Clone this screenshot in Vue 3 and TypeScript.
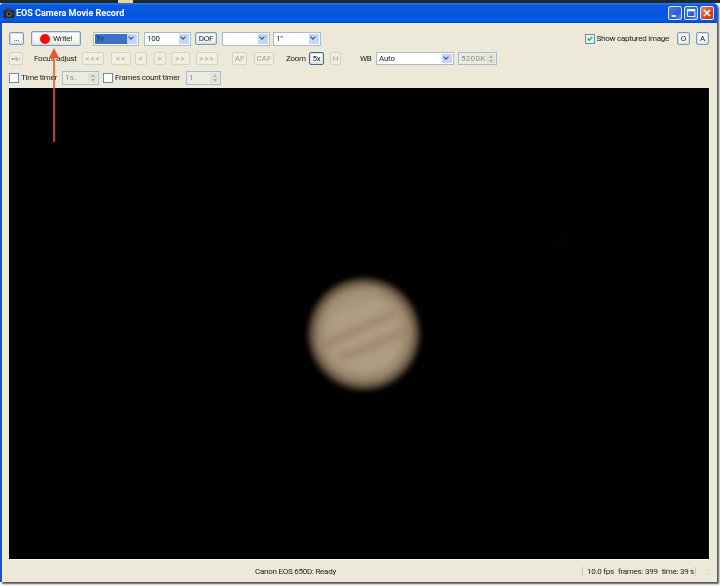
<script setup lang="ts">
const focusButtons: { label: string; cls: string }[] = [
  { label: '<<<', cls: 'f1' },
  { label: '<<', cls: 'f2' },
  { label: '<', cls: 'f3' },
  { label: '>', cls: 'f4' },
  { label: '>>', cls: 'f5' },
  { label: '>>>', cls: 'f6' },
]
</script>

<template>
  <div class="screen">
    <div class="desktop">
      <span class="desk-yellow"></span>
    </div>
    <div class="window">
      <header class="titlebar">
        <svg class="cam" viewBox="0 0 12 12" width="12" height="12">
          <rect x="0.5" y="3" width="11" height="8" rx="1" fill="#2b2a28" />
          <rect x="3" y="1.5" width="5" height="2.5" fill="#3c3a36" />
          <circle cx="6" cy="7" r="2.6" fill="#6d6a62" />
          <circle cx="6" cy="7" r="1.4" fill="#14140f" />
        </svg>
        <span class="title">EOS Camera Movie Record</span>
        <div class="winbtns">
          <span class="wb blue"><svg viewBox="0 0 14 14"><rect x="3" y="9.5" width="5" height="2" fill="#fff" /></svg></span>
          <span class="wb blue"><svg viewBox="0 0 14 14"><rect x="3" y="3" width="8.5" height="8" fill="none" stroke="#fff" stroke-width="1" /><rect x="3" y="3" width="8.5" height="2" fill="#fff" /></svg></span>
          <span class="wb red"><svg viewBox="0 0 14 14"><path d="M3.5 3.5l7 7M10.5 3.5l-7 7" stroke="#fff" stroke-width="1.8" fill="none" /></svg></span>
        </div>
      </header>

      <main class="client">
        <div class="row row1">
          <button class="btn dots">...</button>
          <button class="btn write"><span class="rec"></span>Write!</button>
          <div class="select tv"><span class="val sel">Tv</span><span class="arrow"></span></div>
          <div class="select iso"><span class="val">100</span><span class="arrow"></span></div>
          <button class="btn dof">DOF</button>
          <div class="select blank"><span class="val"></span><span class="arrow"></span></div>
          <div class="select shutter"><span class="val">1"</span><span class="arrow"></span></div>
          <label class="check show"><span class="box on"><svg viewBox="0 0 10 10" width="9" height="9"><path d="M2 5l2 2.2L8 3" fill="none" stroke="#2aa52a" stroke-width="1.7" /></svg></span>Show captured image</label>
          <button class="btn oa o">O</button>
          <button class="btn oa a">A</button>
        </div>

        <div class="row row2">
          <button class="btn off usb">
            <svg viewBox="0 0 14 8" width="11" height="6"><path d="M1 4h11M4 4l2-2h2M6 4l1.5 2H9" fill="none" stroke="#8a8a84" stroke-width="0.9" /><circle cx="1.5" cy="4" r="1.2" fill="#8a8a84" /></svg>
          </button>
          <span class="lbl focus">Focus adjust</span>
          <button v-for="b in focusButtons" :key="b.cls" class="btn off" :class="b.cls">{{ b.label }}</button>
          <button class="btn off af">AF</button>
          <button class="btn off caf">CAF</button>
          <span class="lbl zoom">Zoom</span>
          <button class="btn z5">5x</button>
          <button class="btn off h">H</button>
          <span class="lbl wbl">WB</span>
          <div class="select wbs"><span class="val">Auto</span><span class="arrow"></span></div>
          <div class="spin k"><span class="spinval">5200K</span><span class="spinarrows"><i class="up"></i><i class="down"></i></span></div>
        </div>

        <div class="row row3">
          <label class="check first"><span class="box"></span>Time timer</label>
          <div class="spin s1"><span class="spinval">1s.</span><span class="spinarrows"><i class="up"></i><i class="down"></i></span></div>
          <label class="check fc"><span class="box"></span>Frames count timer</label>
          <div class="spin s2"><span class="spinval">1</span><span class="spinarrows"><i class="up"></i><i class="down"></i></span></div>
        </div>

        <div class="view">
          <svg class="sky" viewBox="0 0 700 471" width="700" height="471">
            <defs>
              <radialGradient id="disc" cx="50%" cy="50%" r="50%">
                <stop offset="0%" stop-color="#b0a188" />
                <stop offset="62%" stop-color="#ad9d82" />
                <stop offset="80%" stop-color="#97846a" />
                <stop offset="92%" stop-color="#5e4b3a" />
                <stop offset="100%" stop-color="#1a1410" />
              </radialGradient>
              <filter id="soft" x="-30%" y="-30%" width="160%" height="160%"><feGaussianBlur stdDeviation="2.6" /></filter>
              <filter id="softer" x="-30%" y="-60%" width="160%" height="220%"><feGaussianBlur stdDeviation="4" /></filter>
              <clipPath id="planet"><circle cx="355" cy="246" r="49" /></clipPath>
            </defs>
            <rect width="700" height="471" fill="#020101" />
            <circle cx="355" cy="246" r="57" fill="url(#disc)" filter="url(#soft)" />
            <g clip-path="url(#planet)" filter="url(#softer)">
              <path d="M310 259 L345 243 L388 224" fill="none" stroke="#9f806a" stroke-width="7" />
              <path d="M330 270 L365 257 L404 240" fill="none" stroke="#9f806a" stroke-width="7" />
              <path d="M322 222 L370 203" fill="none" stroke="#a0917a" stroke-width="7" />
            </g>
            <circle cx="554" cy="153" r="3" fill="#2a0c0a" filter="url(#softer)" />
            <circle cx="444" cy="181" r="2.5" fill="#101612" filter="url(#softer)" />
          </svg>
        </div>

        <footer class="status">
          <span class="ready">Canon EOS 650D: Ready</span>
          <span class="stats"><span class="fps">10.0 fps</span><span class="fr">frames: 399</span><span class="tm">time: 39 s</span></span>
          <span class="grip">.:</span>
        </footer>
      </main>
    </div>

    <svg class="arrowmark" viewBox="0 0 10 94" width="10" height="94">
      <path d="M5 8V94" stroke="#f0522a" stroke-width="1.6" fill="none" />
      <path d="M5 0L10 10H0Z" fill="#f0522a" />
    </svg>
  </div>
</template>

<style scoped>
.screen {
  position: relative;
  width: 720px;
  height: 586px;
  overflow: hidden;
  background: #fff;
  font-family: Roboto, "Liberation Sans", sans-serif;
  font-size: 8px;
  letter-spacing: -0.25px;
  color: #222;
  filter: blur(0.3px);
}
.desktop {
  position: relative;
  height: 3px;
  background: #1c2a2c;
}
.desk-yellow {
  position: absolute;
  left: 118px;
  top: 0;
  width: 15px;
  height: 3px;
  background: #e8d890;
}
.window {
  width: 717px;
  height: 579px;
  display: flex;
  flex-direction: column;
  background: #0f52e0;
  border-radius: 4px 4px 0 0;
  box-shadow: 2px 2px 2px #555;
}
.titlebar {
  height: 20px;
  flex: none;
  display: flex;
  align-items: center;
  padding: 0 3px 0 3px;
  background: linear-gradient(#2c7cf0 0%, #0a5ae6 12%, #0453dd 55%, #0a5ce8 85%, #0346c8 100%);
  border-radius: 4px 4px 0 0;
}
.cam { flex: none; }
.title {
  margin-left: 1px;
  color: #fff;
  font-size: 9px;
  font-weight: 700;
  letter-spacing: 0;
  white-space: nowrap;
}
.winbtns {
  margin-left: auto;
  display: flex;
  gap: 2px;
}
.wb {
  width: 14px;
  height: 14px;
  border-radius: 2px;
  border: 1px solid #dfe8fb;
  box-sizing: border-box;
  display: block;
}
.wb svg { display: block; width: 12px; height: 12px; }
.blue { background: linear-gradient(135deg, #4d7fe8, #2a5bd8 60%, #5c8aef); }
.red { background: linear-gradient(135deg, #ee8a68, #d8431e 60%, #c83a14); }
.client {
  flex: 1;
  margin: 0 0 0 2px;
  background: #ece9d8;
  display: flex;
  flex-direction: column;
  padding: 0 7px;
  min-height: 0;
}
.row {
  display: flex;
  align-items: center;
  flex: none;
  white-space: nowrap;
}
.row1 { height: 15px; margin-top: 8px; }
.row2 { height: 13px; margin-top: 6px; }
.row3 { height: 15px; margin-top: 5px; }
.btn {
  box-sizing: border-box;
  height: 13px;
  padding: 0;
  font: inherit;
  letter-spacing: inherit;
  color: #222;
  border: 1px solid #7f9db9;
  border-radius: 2px;
  background: linear-gradient(#fff, #f3f2ea 80%, #dcd8c8);
  box-shadow: inset 0 0 0 1px #cfe0f2;
  display: flex;
  align-items: center;
  justify-content: center;
  flex: none;
}
.off {
  color: #a09f94;
  border-color: #d6d3c2;
  background: #f0eee2;
  box-shadow: none;
  letter-spacing: 1px;
}
.dots { width: 15px; }
.write { width: 50px; height: 15px; margin-left: 7px; gap: 3px; }
.rec { width: 10px; height: 10px; border-radius: 50%; background: #f40c0c; }
.select {
  box-sizing: border-box;
  height: 14px;
  display: flex;
  align-items: center;
  flex: none;
  padding: 1px;
  background: #fff;
  border: 1px solid #a8bbd0;
}
.val {
  flex: 1;
  height: 100%;
  line-height: 10px;
  padding-left: 1px;
  color: #222;
  min-width: 0;
}
.sel { background: #3a70c8; color: #16305e; }
.arrow {
  flex: none;
  width: 10px;
  height: 100%;
  background: #c6d5f2;
  position: relative;
}
.arrow::after {
  content: "";
  position: absolute;
  left: 2px;
  top: 1px;
  width: 3px;
  height: 3px;
  border-right: 1.5px solid #2e4a86;
  border-bottom: 1.5px solid #2e4a86;
  transform: rotate(45deg);
}
.tv { width: 46px; margin-left: 12px; }
.iso { width: 47px; margin-left: 5px; }
.dof { width: 22px; margin-left: 4px; }
.blank { width: 48px; margin-left: 5px; }
.shutter { width: 48px; margin-left: 3px; }
.check { display: flex; align-items: center; flex: none; }
.box {
  box-sizing: border-box;
  flex: none;
  width: 10px;
  height: 10px;
  margin-right: 2px;
  background: #fff;
  border: 1px solid #6f8bab;
  display: flex;
  align-items: center;
  justify-content: center;
}
.box.on { background: #e8f0f8; }
.show { margin-left: auto; }
.oa { width: 13px; }
.o { margin-left: 8px; }
.a { margin-left: 6px; margin-right: 1px; }
.usb { width: 14px; }
.focus { margin-left: 11px; width: 41px; flex: none; }
.f1 { width: 22px; margin-left: 7px; }
.f2 { width: 20px; margin-left: 7px; }
.f3 { width: 12px; margin-left: 4px; }
.f4 { width: 12px; margin-left: 7px; }
.f5 { width: 19px; margin-left: 5px; }
.f6 { width: 22px; margin-left: 6px; }
.af { width: 15px; margin-left: 14px; letter-spacing: 0; }
.caf { width: 20px; margin-left: 7px; letter-spacing: 0; }
.zoom { margin-left: 12px; width: 18px; flex: none; }
.z5 { width: 15px; margin-left: 5px; border-color: #3f6a94; }
.h { width: 11px; margin-left: 6px; letter-spacing: 0; }
.wbl { margin-left: 19px; width: 11px; flex: none; }
.wbs { width: 78px; height: 13px; margin-left: 5px; }
.spin {
  box-sizing: border-box;
  display: flex;
  align-items: stretch;
  flex: none;
  border: 1px solid #a8bbd0;
  background: #ecebe0;
  color: #8f8e84;
  padding: 1px;
  height: 14px;
}
.spinval { flex: 1; line-height: 10px; padding-left: 1px; letter-spacing: 0.3px; }
.spinarrows {
  flex: none;
  width: 9px;
  display: flex;
  flex-direction: column;
  justify-content: center;
  gap: 2px;
  align-items: center;
  background: #e4e2d6;
}
.spinarrows i {
  width: 0;
  height: 0;
  border-left: 2.5px solid transparent;
  border-right: 2.5px solid transparent;
}
.up { border-bottom: 3px solid #b5b4a8; }
.down { border-top: 3px solid #b5b4a8; }
.k { width: 39px; height: 13px; margin-left: 4px; }
.s1 { width: 37px; margin-left: 7px; }
.fc { margin-left: 4px; width: 76px; }
.s2 { width: 35px; margin-left: 7px; }
.first { width: 46px; }
.view {
  flex: none;
  width: 700px;
  height: 471px;
  margin-top: 3px;
  background: #020101;
  border-right: 1px solid #f8f7f0;
  border-bottom: 1px solid #f8f7f0;
}
.sky { display: block; }
.status {
  flex: 1;
  display: flex;
  align-items: center;
  margin-right: -6px;
  position: relative;
}
.ready { margin-left: 246px; }
.stats { margin-left: auto; display: flex; border-left: 1px solid #cfcbb8; padding-left: 4px; border-right: 1px solid #cfcbb8; padding-right: 1px; }
.fr { margin-left: 4px; }
.tm { margin-left: 4px; }
.grip { width: 20px; color: #a8a594; text-align: right; padding-right: 5px; box-sizing: border-box; letter-spacing: 1px; }
.arrowmark {
  position: absolute;
  left: 49px;
  top: 48px;
}
</style>
